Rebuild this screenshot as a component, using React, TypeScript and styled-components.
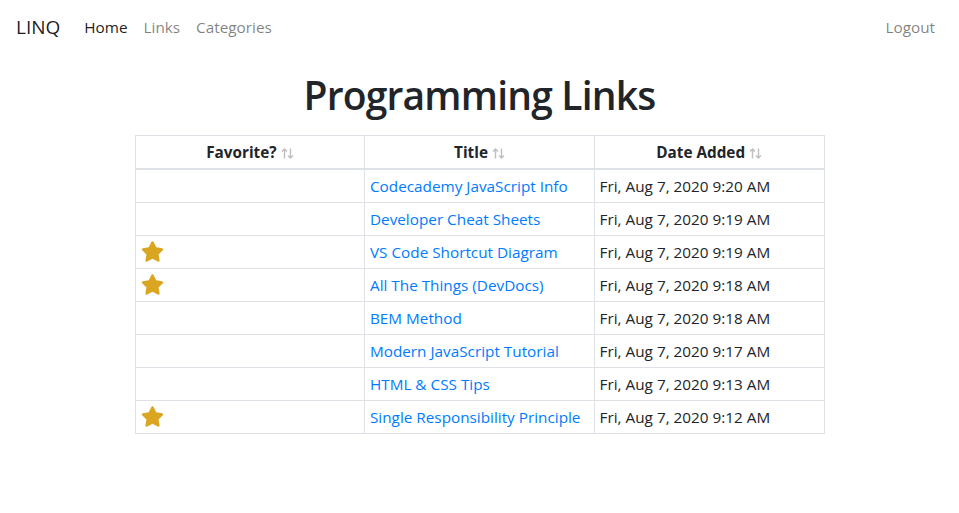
import React from "react";
import styled, { createGlobalStyle } from "styled-components";

const Global = createGlobalStyle`
  html, body { margin: 0; padding: 0; background: #fff; }
  body {
    font-family: "Open Sans", "Noto Sans", sans-serif;
    font-size: 15.3px;
    line-height: 1.5;
    color: #212529;
  }
  * { box-sizing: border-box; }
`;

const Navbar = styled.nav`
  display: flex;
  align-items: center;
  padding: 7px 16px 9px;
  height: 56px;
`;

const Brand = styled.a`
  font-size: 19px;
  color: rgba(0, 0, 0, 0.9);
  margin-right: 16px;
  text-decoration: none;
  line-height: 30px;
`;

const NavList = styled.div`
  display: flex;
  flex: 1;
`;

const NavLink = styled.a<{ $active?: boolean }>`
  padding: 8px;
  color: ${(p) => (p.$active ? "rgba(0,0,0,0.9)" : "rgba(0,0,0,0.5)")};
  text-decoration: none;
`;

const Container = styled.main`
  width: 690px;
  margin: 0 auto;
`;

const Title = styled.h1`
  font-size: 39px;
  font-weight: 600;
  letter-spacing: -0.8px;
  line-height: 46.8px;
  text-align: center;
  margin: 16px 0 16px;
`;

const Table = styled.table`
  width: 100%;
  border-collapse: collapse;
  table-layout: fixed;
`;

const Th = styled.th`
  border: 1px solid #dee2e6;
  border-bottom-width: 2px;
  padding: 4px 4.8px;
  height: 34px;
  line-height: 22px;
  font-weight: 700;
  text-align: center;
`;

const Td = styled.td`
  border: 1px solid #dee2e6;
  padding: 4px 4.8px;
  height: 33px;
  line-height: 22px;
  vertical-align: middle;
`;

const Link = styled.a`
  color: #007bff;
  text-decoration: none;
`;

const SortIcon = styled.svg`
  width: 13px;
  height: 11px;
  margin-left: 4px;
  vertical-align: -1px;
`;

const StarIcon = styled.svg`
  width: 23px;
  height: 21px;
  display: block;
  margin-left: 1px;
`;

const Sort = () => (
  <SortIcon viewBox="0 0 13 11" fill="none" stroke="#bfbfbf" strokeWidth="1.4">
    <path d="M3.5 10.5V1M1 3.5L3.5 1L6 3.5" />
    <path d="M9.5 0.5V10M7 7.5L9.5 10L12 7.5" />
  </SortIcon>
);

const Star = () => (
  <StarIcon viewBox="0 0 576 512">
    <path
      fill="#DAA520"
      d="M259.3 17.8L194 150.2 47.9 171.5c-26.2 3.8-36.7 36.1-17.7 54.6l105.7 103-25 145.5c-4.5 26.3 23.2 46 46.4 33.7L288 439.6l130.7 68.7c23.2 12.2 50.9-7.4 46.4-33.7l-25-145.5 105.7-103c19-18.5 8.5-50.8-17.7-54.6L382 150.2 316.7 17.8c-11.7-23.6-45.6-23.9-57.4 0z"
    />
  </StarIcon>
);

const rows = [
  { fav: false, title: "Codecademy JavaScript Info", date: "Fri, Aug 7, 2020 9:20 AM" },
  { fav: false, title: "Developer Cheat Sheets", date: "Fri, Aug 7, 2020 9:19 AM" },
  { fav: true, title: "VS Code Shortcut Diagram", date: "Fri, Aug 7, 2020 9:19 AM" },
  { fav: true, title: "All The Things (DevDocs)", date: "Fri, Aug 7, 2020 9:18 AM" },
  { fav: false, title: "BEM Method", date: "Fri, Aug 7, 2020 9:18 AM" },
  { fav: false, title: "Modern JavaScript Tutorial", date: "Fri, Aug 7, 2020 9:17 AM" },
  { fav: false, title: "HTML & CSS Tips", date: "Fri, Aug 7, 2020 9:13 AM" },
  { fav: true, title: "Single Responsibility Principle", date: "Fri, Aug 7, 2020 9:12 AM" },
];

export default function App() {
  return (
    <>
      <Global />
      <Navbar>
        <Brand href="#">LINQ</Brand>
        <NavList>
          <NavLink $active href="#">Home</NavLink>
          <NavLink href="#">Links</NavLink>
          <NavLink href="#">Categories</NavLink>
        </NavList>
        <NavLink href="#">Logout</NavLink>
      </Navbar>
      <Container>
        <Title>Programming Links</Title>
        <Table>
          <thead>
            <tr>
              <Th>Favorite?<Sort /></Th>
              <Th>Title<Sort /></Th>
              <Th>Date Added<Sort /></Th>
            </tr>
          </thead>
          <tbody>
            {rows.map((r) => (
              <tr key={r.title}>
                <Td>{r.fav ? <Star /> : null}</Td>
                <Td><Link href="#">{r.title}</Link></Td>
                <Td>{r.date}</Td>
              </tr>
            ))}
          </tbody>
        </Table>
      </Container>
    </>
  );
}
